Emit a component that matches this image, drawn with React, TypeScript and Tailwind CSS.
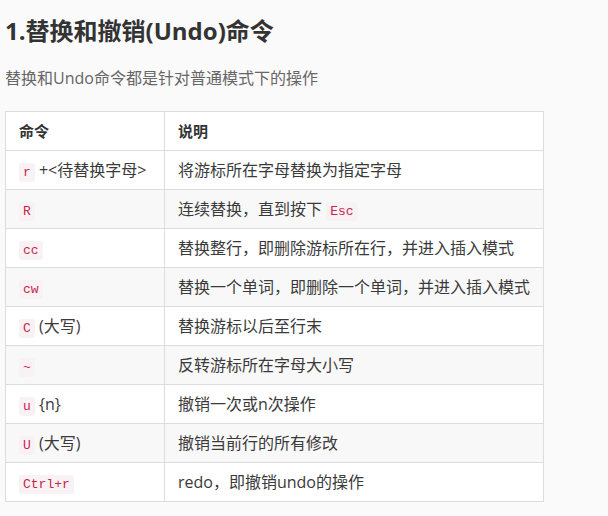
import React from "react";

const C = ({ children }: { children: React.ReactNode }) => (
  <code className="rounded-[3px] bg-[#f9f2f4] px-[4px] py-[2px] font-['Liberation_Mono',monospace] text-[13px] text-[#c7254e]">
    {children}
  </code>
);

const rows: [React.ReactNode, React.ReactNode][] = [
  [<><C>r</C> +&lt;待替换字母&gt;</>, "将游标所在字母替换为指定字母"],
  [<C>R</C>, <>连续替换，直到按下 <C>Esc</C></>],
  [<C>cc</C>, "替换整行，即删除游标所在行，并进入插入模式"],
  [<C>cw</C>, "替换一个单词，即删除一个单词，并进入插入模式"],
  [<><C>C</C> (大写)</>, "替换游标以后至行末"],
  [<C>~</C>, "反转游标所在字母大小写"],
  [<><C>u</C> {"{n}"}</>, "撤销一次或n次操作"],
  [<><C>U</C> (大写)</>, "撤销当前行的所有修改"],
  [<C>Ctrl+r</C>, "redo，即撤销undo的操作"],
];

export default function App() {
  return (
    <div className="min-h-[516px] w-[608px] bg-[#fafafa] px-[5px] pt-[14px] font-['Open_Sans','Noto_Sans_CJK_SC',sans-serif] text-[#333]">
      <h1 className="text-[24px] font-bold leading-[34px] text-[#333]">1.替换和撤销(Undo)命令</h1>
      <p className="mt-[18px] text-[16px] leading-[24px] text-[#666]">替换和Undo命令都是针对普通模式下的操作</p>
      <table className="mt-[21px] w-[539px] border-collapse bg-white text-[16px] text-[#3a3a3a]">
        <thead>
          <tr className="h-[39px]">
            <th className="w-[159px] border border-[#ddd] px-[13px] text-left font-bold text-[15px] text-[#333]">命令</th>
            <th className="border border-[#ddd] px-[13px] text-left font-bold text-[15px] text-[#333]">说明</th>
          </tr>
        </thead>
        <tbody>
          {rows.map(([a, b], i) => (
            <tr key={i} className={`h-[39px] ${i % 2 === 1 ? "bg-[#f8f8f8]" : "bg-white"}`}>
              <td className="border border-[#ddd] px-[13px]">{a}</td>
              <td className="border border-[#ddd] px-[13px]">{b}</td>
            </tr>
          ))}
        </tbody>
      </table>
    </div>
  );
}
